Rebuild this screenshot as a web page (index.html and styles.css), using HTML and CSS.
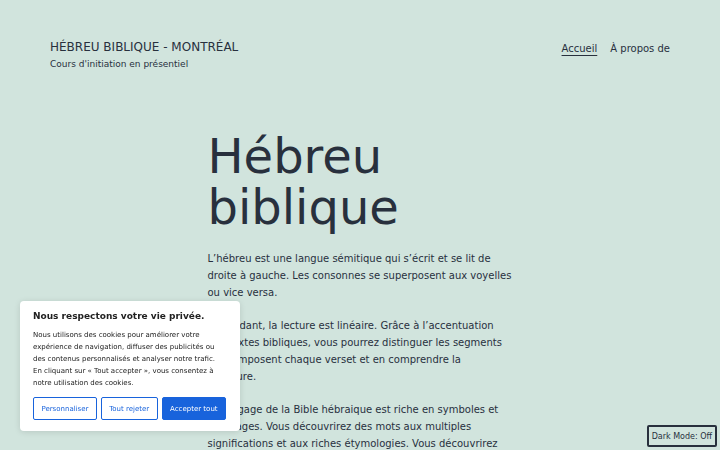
FILE: index.html
```html
<!DOCTYPE html>
<html lang="fr">
<head>
<meta charset="utf-8">
<title>Hébreu biblique - Montréal</title>
<link rel="stylesheet" href="styles.css">
</head>
<body>
<header class="site-header">
  <div class="branding">
    <p class="site-title">Hébreu biblique - Montréal</p>
    <p class="site-description">Cours d'initiation en présentiel</p>
  </div>
  <nav class="primary-nav">
    <a href="#" class="nav-link current">Accueil</a>
    <a href="#" class="nav-link">À propos de</a>
  </nav>
</header>
<main class="content">
  <h1 class="page-title">Hébreu biblique</h1>
  <p>L’hébreu est une langue sémitique qui s’écrit et se lit de droite à gauche. Les consonnes se superposent aux voyelles ou vice versa.</p>
  <p>Cependant, la lecture est linéaire. Grâce à l’accentuation des textes bibliques, vous pourrez distinguer les segments qui composent chaque verset et en comprendre la structure.</p>
  <p>Le langage de la Bible hébraique est riche en symboles et en images. Vous découvrirez des mots aux multiples significations et aux riches étymologies. Vous découvrirez aussi la beauté de la poésie hébraïque.</p>
</main>
<div class="cookie-banner">
  <p class="cookie-title">Nous respectons votre vie privée.</p>
  <p class="cookie-text">Nous utilisons des cookies pour améliorer votre expérience de navigation, diffuser des publicités ou des contenus personnalisés et analyser notre trafic. En cliquant sur « Tout accepter », vous consentez à notre utilisation des cookies.</p>
  <div class="cookie-actions">
    <button class="cookie-btn outline">Personnaliser</button>
    <button class="cookie-btn outline">Tout rejeter</button>
    <button class="cookie-btn solid">Accepter tout</button>
  </div>
</div>
<button class="dark-toggle">Dark Mode: Off</button>
</body>
</html>
```
FILE: styles.css
```css
html, body {
  margin: 0;
  padding: 0;
}
body {
  background: #d1e4dd;
  color: #28303d;
  font-family: "DejaVu Sans", sans-serif;
  overflow: hidden;
  height: 450px;
}
.site-header {
  display: flex;
  justify-content: space-between;
  align-items: flex-start;
  padding: 39px 50px 0 50px;
}
.branding p {
  margin: 0;
}
.site-title {
  font-size: 12px;
  line-height: 16px;
  text-transform: uppercase;
}
.site-description {
  font-size: 9px;
  line-height: 13px;
  margin-top: 3px !important;
}
.primary-nav {
  display: flex;
  gap: 13px;
  font-size: 10px;
  line-height: 16px;
  padding-top: 2px;
}
.nav-link {
  color: #28303d;
  text-decoration: none;
}
.nav-link.current {
  text-decoration: underline;
  text-underline-offset: 3px;
  text-decoration-thickness: 1px;
}
.content {
  width: 305px;
  margin: 60px auto 0;
}
.page-title {
  font-size: 48px;
  line-height: 51px;
  font-weight: 400;
  margin: 0 0 17px;
}
.content p {
  font-size: 10px;
  line-height: 17px;
  margin: 0 0 16px;
}
.cookie-banner {
  position: fixed;
  left: 20px;
  bottom: 19px;
  width: 220px;
  box-sizing: border-box;
  padding: 9px 14px 11px 13px;
  background: #ffffff;
  border-radius: 4px;
  box-shadow: 0 1px 6px rgba(0, 0, 0, 0.12);
  color: #212121;
}
.cookie-title {
  margin: 0 0 6px;
  font-size: 9px;
  line-height: 13px;
  font-weight: 700;
}
.cookie-text {
  margin: 0;
  font-size: 7px;
  line-height: 12px;
  color: #212121;
}
.cookie-actions {
  display: flex;
  gap: 4px;
  margin-top: 8px;
}
.cookie-btn {
  flex: 1 1 auto;
  height: 23px;
  padding: 0;
  font-family: "DejaVu Sans", sans-serif;
  font-size: 7px;
  border-radius: 2px;
  border: 1.5px solid #1863dc;
  cursor: pointer;
}
.cookie-btn.outline {
  background: #ffffff;
  color: #1863dc;
}
.cookie-btn.solid {
  background: #1863dc;
  color: #ffffff;
}
.dark-toggle {
  position: fixed;
  right: 3px;
  bottom: 3px;
  height: 22px;
  padding: 0 3px;
  background: #d1e4dd;
  color: #28303d;
  border: 2px solid #28303d;
  border-radius: 2px;
  font-family: "DejaVu Sans", sans-serif;
  font-size: 8px;
}
```
